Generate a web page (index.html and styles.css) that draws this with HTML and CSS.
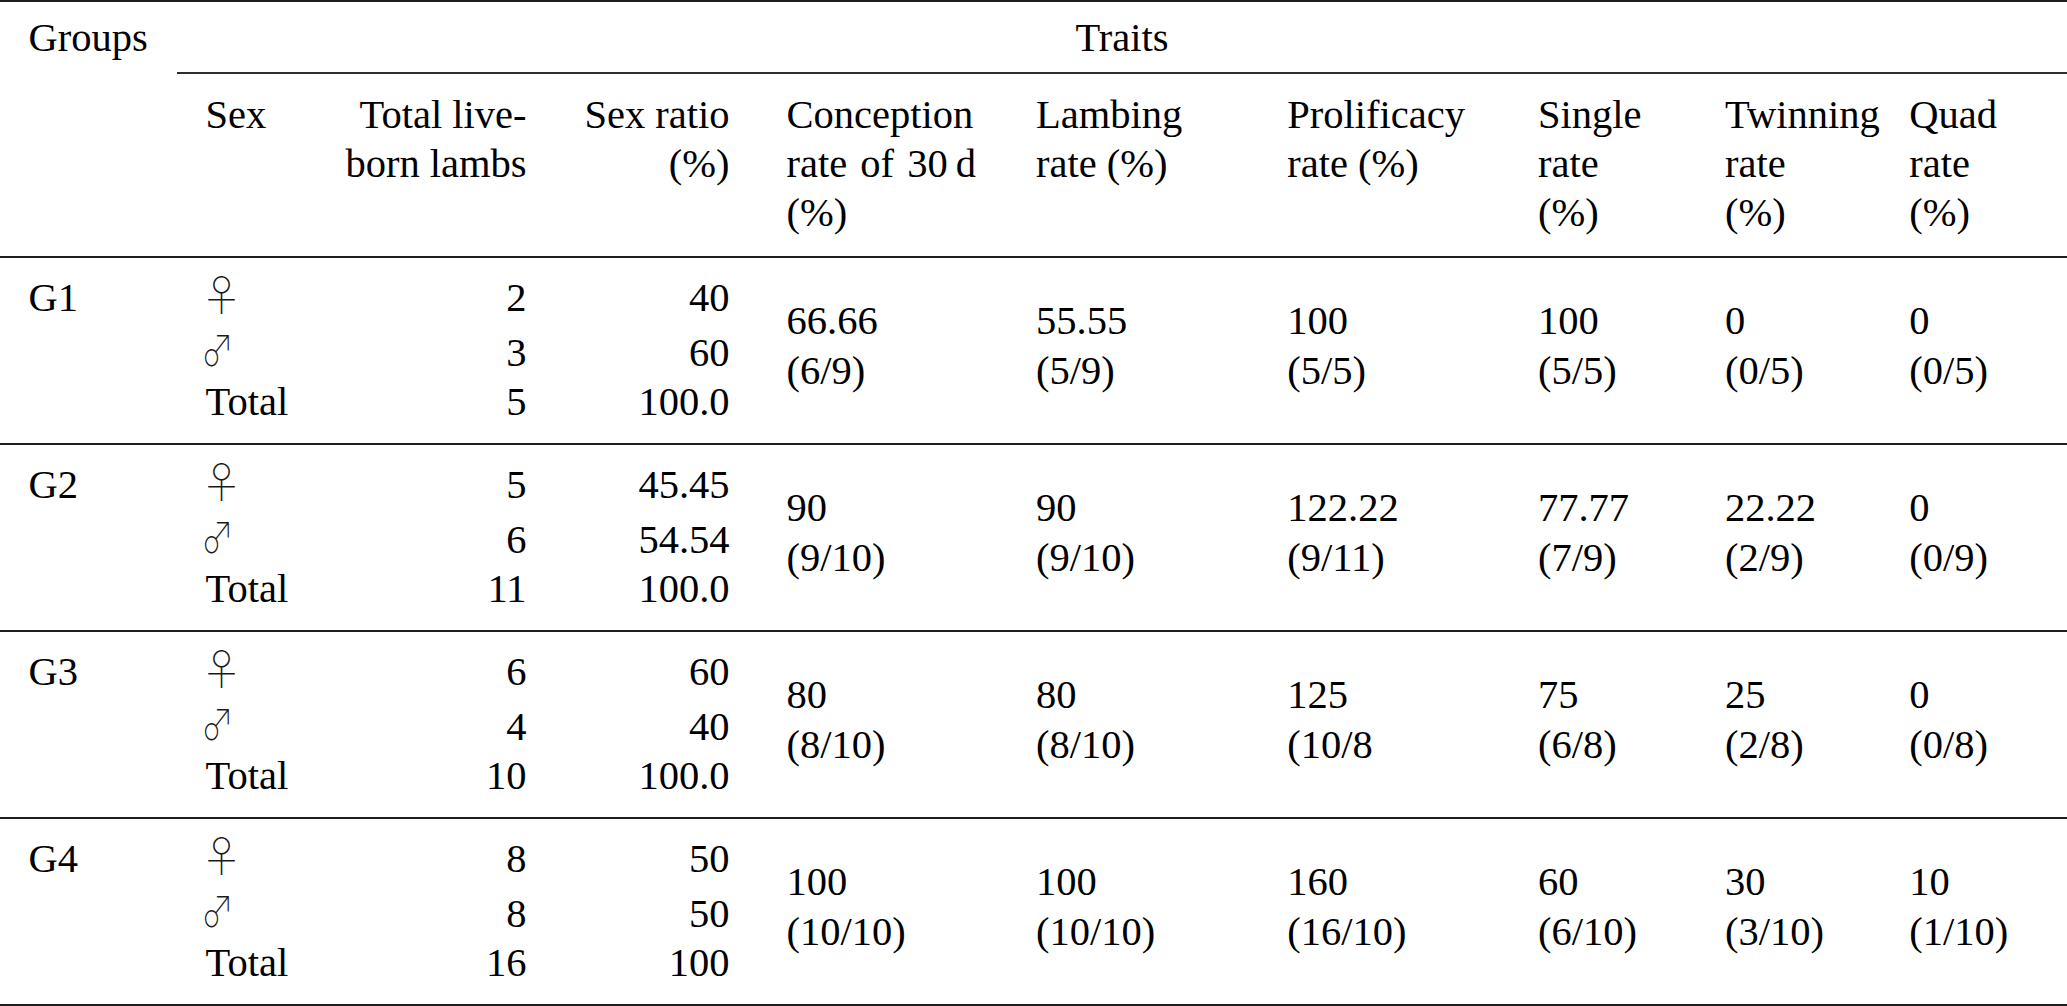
FILE: index.html
```html
<!DOCTYPE html>
<html lang="en">
<head>
<meta charset="utf-8">
<title>Traits by group</title>
<link rel="stylesheet" href="styles.css">
</head>
<body>
<table class="data">
  <colgroup>
    <col class="c1"><col class="c2"><col class="c3"><col class="c4"><col class="c5">
    <col class="c6"><col class="c7"><col class="c8"><col class="c9"><col class="c10">
  </colgroup>
  <thead>
    <tr class="top">
      <th class="groups" rowspan="2">Groups</th>
      <th class="traits" colspan="9">Traits</th>
    </tr>
    <tr class="sub">
      <th class="l">Sex</th>
      <th class="r">Total live-<br>born lambs</th>
      <th class="r">Sex ratio<br>(%)</th>
      <th class="l">Conception<br><span class="wide">rate of 30&#8201;d</span><br>(%)</th>
      <th class="l">Lambing<br>rate (%)</th>
      <th class="l">Prolificacy<br>rate (%)</th>
      <th class="l">Single<br>rate<br>(%)</th>
      <th class="l">Twinning<br>rate<br>(%)</th>
      <th class="l">Quad<br>rate<br>(%)</th>
    </tr>
  </thead>
  <tbody>
    <tr class="r1">
      <td class="grp" rowspan="3">G1</td>
      <td class="l"><span class="sym female">♀</span></td>
      <td class="r">2</td>
      <td class="r">40</td>
      <td class="tr" rowspan="3">66.66<br>(6/9)</td>
      <td class="tr" rowspan="3">55.55<br>(5/9)</td>
      <td class="tr" rowspan="3">100<br>(5/5)</td>
      <td class="tr" rowspan="3">100<br>(5/5)</td>
      <td class="tr" rowspan="3">0<br>(0/5)</td>
      <td class="tr" rowspan="3">0<br>(0/5)</td>
    </tr>
    <tr class="r2">
      <td class="l"><span class="sym male">♂</span></td>
      <td class="r">3</td>
      <td class="r">60</td>
    </tr>
    <tr class="r3">
      <td class="l">Total</td>
      <td class="r">5</td>
      <td class="r">100.0</td>
    </tr>
  </tbody>
  <tbody>
    <tr class="r1">
      <td class="grp" rowspan="3">G2</td>
      <td class="l"><span class="sym female">♀</span></td>
      <td class="r">5</td>
      <td class="r">45.45</td>
      <td class="tr" rowspan="3">90<br>(9/10)</td>
      <td class="tr" rowspan="3">90<br>(9/10)</td>
      <td class="tr" rowspan="3">122.22<br>(9/11)</td>
      <td class="tr" rowspan="3">77.77<br>(7/9)</td>
      <td class="tr" rowspan="3">22.22<br>(2/9)</td>
      <td class="tr" rowspan="3">0<br>(0/9)</td>
    </tr>
    <tr class="r2">
      <td class="l"><span class="sym male">♂</span></td>
      <td class="r">6</td>
      <td class="r">54.54</td>
    </tr>
    <tr class="r3">
      <td class="l">Total</td>
      <td class="r">11</td>
      <td class="r">100.0</td>
    </tr>
  </tbody>
  <tbody>
    <tr class="r1">
      <td class="grp" rowspan="3">G3</td>
      <td class="l"><span class="sym female">♀</span></td>
      <td class="r">6</td>
      <td class="r">60</td>
      <td class="tr" rowspan="3">80<br>(8/10)</td>
      <td class="tr" rowspan="3">80<br>(8/10)</td>
      <td class="tr" rowspan="3">125<br>(10/8</td>
      <td class="tr" rowspan="3">75<br>(6/8)</td>
      <td class="tr" rowspan="3">25<br>(2/8)</td>
      <td class="tr" rowspan="3">0<br>(0/8)</td>
    </tr>
    <tr class="r2">
      <td class="l"><span class="sym male">♂</span></td>
      <td class="r">4</td>
      <td class="r">40</td>
    </tr>
    <tr class="r3">
      <td class="l">Total</td>
      <td class="r">10</td>
      <td class="r">100.0</td>
    </tr>
  </tbody>
  <tbody class="last">
    <tr class="r1">
      <td class="grp" rowspan="3">G4</td>
      <td class="l"><span class="sym female">♀</span></td>
      <td class="r">8</td>
      <td class="r">50</td>
      <td class="tr" rowspan="3">100<br>(10/10)</td>
      <td class="tr" rowspan="3">100<br>(10/10)</td>
      <td class="tr" rowspan="3">160<br>(16/10)</td>
      <td class="tr" rowspan="3">60<br>(6/10)</td>
      <td class="tr" rowspan="3">30<br>(3/10)</td>
      <td class="tr" rowspan="3">10<br>(1/10)</td>
    </tr>
    <tr class="r2">
      <td class="l"><span class="sym male">♂</span></td>
      <td class="r">8</td>
      <td class="r">50</td>
    </tr>
    <tr class="r3">
      <td class="l">Total</td>
      <td class="r">16</td>
      <td class="r">100</td>
    </tr>
  </tbody>
</table>
</body>
</html>
```

FILE: styles.css
```css
html, body {
  margin: 0;
  padding: 0;
  background: #ffffff;
}

body {
  font-family: "Liberation Serif", "Times New Roman", serif;
  font-size: 40.5px;
  line-height: 49px;
  color: #000000;
}

.data {
  border-collapse: separate;
  border-spacing: 0;
  table-layout: fixed;
  width: 2067px;
}

.c1 { width: 177px; }
.c2 { width: 149px; }
.c3 { width: 229px; }
.c4 { width: 203px; }
.c5 { width: 249.5px; }
.c6 { width: 251.3px; }
.c7 { width: 250.7px; }
.c8 { width: 187px; }
.c9 { width: 184.3px; }
.c10 { width: 186.2px; }

.data th,
.data td {
  padding: 0;
  font-weight: normal;
  text-align: left;
  vertical-align: top;
  white-space: nowrap;
}

.data .l { padding-left: 28.5px; }
.data .r { text-align: right; padding-right: 28.5px; }

/* header */
.top th {
  border-top: 2px solid #1e1e1e;
  padding-top: 11px;
}

.data .groups {
  padding-left: 28.5px;
}

.data .traits {
  text-align: center;
  padding-bottom: 10px;
  border-bottom: 2px solid #2e2e2e;
}

.sub th {
  padding-top: 16px;
  padding-bottom: 19px;
}

.wide { word-spacing: 3px; }

/* body */
.r1 td {
  border-top: 2px solid #1e1e1e;
  padding-top: 15px;
  padding-bottom: 6px;
}

.r3 td {
  padding-bottom: 17px;
}

.data .grp {
  padding-left: 28.5px;
}

.data .tr {
  padding-left: 28.5px;
  padding-top: 38px;
  line-height: 50px;
}

.last .r3 td,
.last .grp,
.last .tr {
  border-bottom: 2px solid #1e1e1e;
}

.sym {
  display: inline-block;
  line-height: 0;
  margin-left: -5px;
  font-family: "Noto Sans CJK JP", "Noto Sans CJK SC", sans-serif;
  font-weight: 100;
  font-size: 42px;
  color: #1a1a1a;
}

.male {
  transform: scale(0.78, 1);
  transform-origin: 0 0;
}
```
